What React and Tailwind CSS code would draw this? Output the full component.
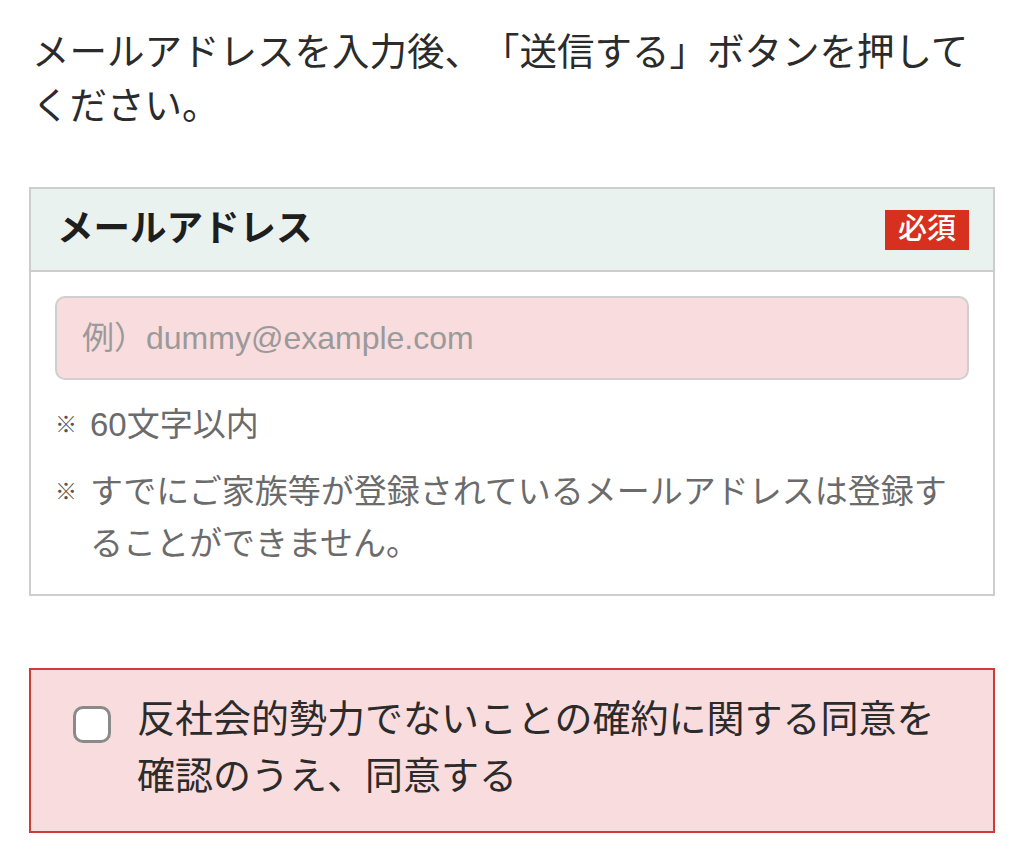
const font = { fontFamily: '"Liberation Sans", "Noto Sans CJK JP", sans-serif' };

const Note = ({ children }) => (
  <div className="flex text-[33px] leading-[52px] text-[#6b6b6b]">
    <span className="w-[35px] shrink-0 text-[22px] text-[#555]">※</span>
    <span>{children}</span>
  </div>
);

export default function App() {
  return (
    <div
      className="min-h-screen bg-white px-[29px] pt-[25px] pb-[16px] text-[#2b2b2b] [text-spacing-trim:space-all]"
      style={font}
    >
      <p className="px-[3px] text-[37.5px] leading-[54px]">
        メールアドレスを入力後、「送信する」ボタンを押してください。
      </p>

      <div className="mt-[54px] border-2 border-[#cdcdcd]">
        <div className="flex h-[83px] items-center justify-between border-b-2 border-[#cdcdcd] bg-[#eaf2ef] pl-[26px] pr-[24px]">
          <h2 className="text-[36.5px] font-bold text-[#1e1e1e]">メールアドレス</h2>
          <span className="flex h-[40px] items-center bg-[#d6301f] px-[13px] text-[29px] font-medium text-white">
            必須
          </span>
        </div>
        <div className="px-6 pt-[24px] pb-[24px]">
          <input
            type="email"
            placeholder="例）dummy@example.com"
            className="block h-[84px] w-full rounded-[10px] border-2 border-[#cfcfcf] bg-[#f9dcdd] px-[25px] text-[32px] outline-none placeholder:text-[#9a9a9a]"
            style={font}
          />
          <div className="mt-[19px] flex flex-col gap-[15px]">
            <Note>60文字以内</Note>
            <Note>すでにご家族等が登録されているメールアドレスは登録することができません。</Note>
          </div>
        </div>
      </div>

      <label className="mt-[72px] flex cursor-pointer items-start border-2 border-[#cf3b36] bg-[#f9dcdd] pt-[21px] pb-[26px] pl-[42px] pr-[40px]">
        <span className="mt-[15px] h-[37px] w-[38px] shrink-0 rounded-[10px] border-[3px] border-[#8a8a8a] bg-white" />
        <span className="ml-[26px] text-[38px] leading-[57px] text-[#2b2b2b]">
          反社会的勢力でないことの確約に関する同意を確認のうえ、同意する
        </span>
      </label>
    </div>
  );
}
